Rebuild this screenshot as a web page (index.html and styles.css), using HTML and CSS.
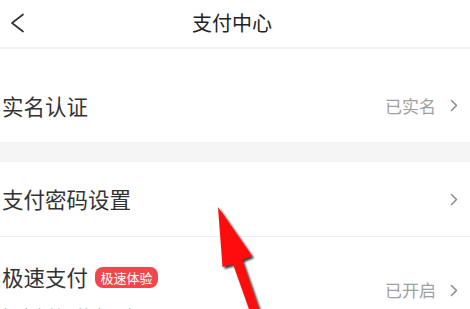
FILE: index.html
```html
<!DOCTYPE html>
<html lang="zh-CN">
<head>
<meta charset="utf-8">
<title>支付中心</title>
<link rel="stylesheet" href="styles.css">
</head>
<body>
<div class="page">
  <header class="topbar">
    <div class="back">
      <svg width="16" height="22" viewBox="0 0 16 22"><polyline points="14,2.5 3,11 14,19.5" fill="none" stroke="#333" stroke-width="1.7" stroke-linecap="round" stroke-linejoin="round"/></svg>
    </div>
    <div class="title">支付中心</div>
    <div class="spacer"></div>
  </header>

  <div class="row row-first">
    <div class="label">实名认证</div>
    <div class="value">已实名<svg class="chev" width="8" height="13" viewBox="0 0 8 13"><polyline points="1.5,1.5 6.5,6.5 1.5,11.5" fill="none" stroke="#8a8a8a" stroke-width="1.5" stroke-linecap="round" stroke-linejoin="round"/></svg></div>
  </div>

  <div class="band"></div>

  <div class="row row-second">
    <div class="label">支付密码设置</div>
    <div class="value"><svg class="chev" width="8" height="13" viewBox="0 0 8 13"><polyline points="1.5,1.5 6.5,6.5 1.5,11.5" fill="none" stroke="#8a8a8a" stroke-width="1.5" stroke-linecap="round" stroke-linejoin="round"/></svg></div>
  </div>

  <div class="row row-third">
    <div class="left">
      <div class="label-line"><span class="label">极速支付</span><span class="badge">极速体验</span></div>
      <div class="sub">极速支付，快人一步</div>
    </div>
    <div class="value value-third">已开启<svg class="chev" width="8" height="13" viewBox="0 0 8 13"><polyline points="1.5,1.5 6.5,6.5 1.5,11.5" fill="none" stroke="#8a8a8a" stroke-width="1.5" stroke-linecap="round" stroke-linejoin="round"/></svg></div>
  </div>

  <svg class="pointer" width="470" height="309" viewBox="0 0 470 309">
    <defs>
      <filter id="sh" x="-20%" y="-20%" width="140%" height="140%">
        <feGaussianBlur in="SourceAlpha" stdDeviation="1.2"/>
        <feOffset dx="1.5" dy="1.5" result="b"/>
        <feComponentTransfer><feFuncA type="linear" slope="0.8"/></feComponentTransfer>
        <feMerge><feMergeNode/><feMergeNode in="SourceGraphic"/></feMerge>
      </filter>
    </defs>
    <polygon points="218,207 252,256 242,260 261.5,316 252.5,319 233,264 222.5,267" fill="#ff0a0a" filter="url(#sh)"/>
  </svg>
</div>
</body>
</html>
```
FILE: styles.css
```css
* { box-sizing: border-box; }
html, body { margin: 0; padding: 0; background: #fff; }
body {
  font-family: "Noto Sans CJK SC", "Noto Sans", sans-serif;
  color: #333;
  width: 470px;
  height: 309px;
  overflow: hidden;
}
.page { position: relative; width: 470px; height: 309px; overflow: hidden; }

.topbar {
  height: 49px;
  display: grid;
  grid-template-columns: 1fr auto 1fr;
  align-items: center;
  border-bottom: 2px solid #f2f2f2;
  padding-bottom: 1px;
}
.back { padding-left: 9px; display: flex; align-items: center; }
.title { font-size: 20px; line-height: 24px; color: #222; margin-left: -6px; }

.row {
  display: flex;
  justify-content: space-between;
  align-items: center;
  padding: 0 12px 0 2px;
}
.label { font-size: 21.5px; line-height: 24px; color: #333; }
.value {
  display: flex;
  align-items: center;
  font-size: 17px;
  line-height: 24px;
  color: #a0a0a0;
}
.chev { margin-left: 14px; }

.row-first { height: 93px; padding-top: 20px; }
.band { height: 20px; background: #f5f5f5; }
.row-second { height: 75px; border-bottom: 1px solid #eeeeee; }

.row-third { align-items: flex-start; }
.left { padding-top: 28px; }
.label-line { display: flex; align-items: center; }
.badge {
  margin-left: 7px;
  height: 21px;
  padding: 0 5.5px;
  border-radius: 8px;
  background: #f0474b;
  color: #fff;
  font-size: 13px;
  line-height: 21px;
}
.sub { margin-top: 16px; font-size: 15px; line-height: 20px; color: #999; }
.value-third { margin-top: 41px; }

.pointer { position: absolute; left: 0; top: 0; pointer-events: none; }
```
